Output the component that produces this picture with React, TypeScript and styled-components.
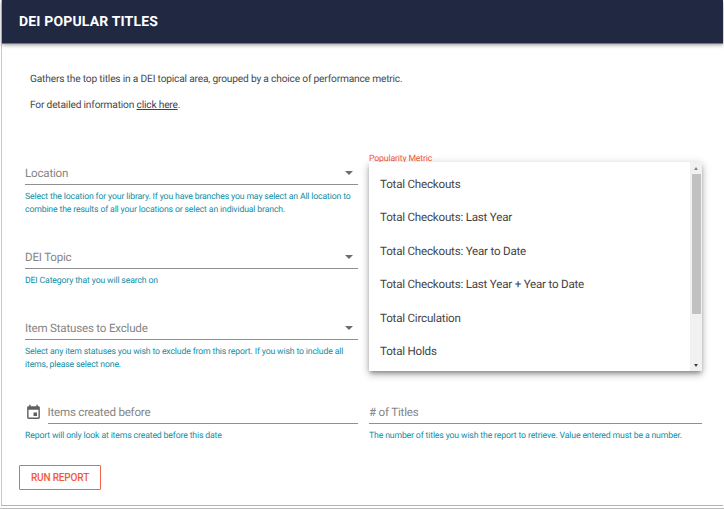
import React from "react";
import styled, { createGlobalStyle } from "styled-components";

const GlobalStyle = createGlobalStyle`
  * { box-sizing: border-box; }
  body {
    margin: 0;
    background: #fff;
    font-family: Roboto, "Liberation Sans", sans-serif;
    text-rendering: geometricPrecision;
    overflow: hidden;
  }
`;

const Page = styled.div`
  height: 509px;
  padding: 0 1px 2px 1px;
  border-bottom: 1px solid #bdbdbd;
`;

const Panel = styled.main`
  height: 506px;
  border-left: 1px solid #c6c8ca;
  border-bottom: 1px solid #b4b4b4;
`;

const Header = styled.header`
  height: 43px;
  padding: 0 17px;
  display: flex;
  align-items: center;
  background: #202842;
  box-shadow: 0 1px 0 #70758a, 0 2px 4px rgba(0, 0, 0, 0.4);
`;

const Title = styled.h1`
  margin: 0;
  color: #fff;
  font-size: 14px;
  line-height: 20px;
  font-weight: 700;
  letter-spacing: 0.17px;
`;

const Intro = styled.section`
  padding: 30px 28px 0;
  height: 115px;
  color: #484848;
  font-size: 10.2px;
  letter-spacing: -0.185px;
  line-height: 14px;
`;

const Paragraph = styled.p`
  margin: 0 0 12px;
`;

const Link = styled.a`
  color: #3a4262;
  text-decoration: underline;
`;

const Form = styled.form`
  padding: 0 21px 0 23px;
  display: grid;
  grid-template-columns: 333px 333px;
  column-gap: 11px;
  row-gap: 26px;
`;

const Field = styled.div<{ $column?: number; $row?: number }>`
  grid-column: ${(p) => p.$column ?? 1};
  grid-row: ${(p) => p.$row ?? "auto"};
  position: relative;
`;

const ControlRow = styled.div`
  display: flex;
  align-items: flex-end;
`;

const Control = styled.div`
  flex: 1;
  height: 27px;
  padding: 4px 5px 0 0;
  display: flex;
  align-items: center;
  justify-content: space-between;
  border-bottom: 1px solid #8f8f8f;
`;

const Label = styled.label`
  color: #858585;
  font-size: 11.6px;
  letter-spacing: -0.21px;
  line-height: 18px;
`;

const Caret = styled.span`
  border: 4px solid transparent;
  border-top-color: #6c6c6c;
  border-bottom: 0;
`;

const Helper = styled.p`
  margin: 6px 0 -1px;
  color: #108ea6;
  font-size: 8.7px;
  letter-spacing: -0.15px;
  line-height: 13px;
  white-space: pre;
`;

const CalendarIcon = styled.svg`
  width: 17px;
  height: 17px;
  margin-right: 6px;
  margin-bottom: 3.5px;
  margin-left: -0.5px;
  fill: #606060;
`;

const FloatingLabel = styled.label`
  display: block;
  color: #f4583c;
  font-size: 8.7px;
  letter-spacing: -0.15px;
  line-height: 12px;
  margin-top: -5px;
`;

const Menu = styled.div`
  position: absolute;
  z-index: 2;
  left: 0;
  top: 4px;
  width: 333px;
  height: 209px;
  display: flex;
  background: #fff;
  box-shadow: 0 3px 4px -1px rgba(0, 0, 0, 0.3), 0 4px 8px rgba(0, 0, 0, 0.18),
    0 1px 9px rgba(0, 0, 0, 0.12);
`;

const Options = styled.ul`
  flex: 1;
  margin: 0;
  padding: 5.3px 11px 0;
  list-style: none;
  overflow: hidden;
`;

const Option = styled.li`
  height: 33.4px;
  display: flex;
  align-items: center;
  color: #444;
  font-size: 11.6px;
  letter-spacing: -0.21px;
`;

const Scrollbar = styled.div`
  width: 12px;
  display: flex;
  flex-direction: column;
  align-items: center;
  background: #f1f1f1;
`;

const Thumb = styled.div`
  width: 9px;
  height: 140px;
  margin-top: 4px;
  background: #c1c1c1;
`;

const ScrollArrow = styled.span<{ $down?: boolean }>`
  margin: ${(p) => (p.$down ? "auto 0 4px" : "5px 0 0")};
  border: 2.5px solid transparent;
  ${(p) =>
    p.$down
      ? "border-top: 3px solid #404040; border-bottom: 0;"
      : "border-bottom: 3px solid #858585; border-top: 0;"}
`;

const RunButton = styled.button`
  display: block;
  margin: 23px 0 0 17px;
  width: 82px;
  height: 25px;
  padding: 0;
  background: #fff;
  border: 1px solid #f4644a;
  border-radius: 1px;
  color: #f4583c;
  font: 500 10px Roboto, sans-serif;
  letter-spacing: -0.15px;
`;

const options = [
  "Total Checkouts",
  "Total Checkouts: Last Year",
  "Total Checkouts: Year to Date",
  "Total Checkouts: Last Year + Year to Date",
  "Total Circulation",
  "Total Holds",
];

const selects = [
  {
    label: "Location",
    help: "Select the location for your library. If you have branches you may select an All location to\ncombine the results of all your locations or select an individual branch.",
  },
  { label: "DEI Topic", help: "DEI Category that you will search on" },
  {
    label: "Item Statuses to Exclude",
    help: "Select any item statuses you wish to exclude from this report. If you wish to include all\nitems, please select none.",
  },
];

export default function App() {
  return (
    <Page>
      <GlobalStyle />
      <Panel>
        <Header>
          <Title>DEI POPULAR TITLES</Title>
        </Header>
        <Intro>
          <Paragraph>
            Gathers the top titles in a DEI topical area, grouped by a choice of performance metric.
          </Paragraph>
          <Paragraph>
            For detailed information <Link href="#">click here</Link>.
          </Paragraph>
        </Intro>
        <Form>
          {selects.map((s, i) => (
            <Field key={s.label} $row={i + 1}>
              <Control>
                <Label>{s.label}</Label>
                <Caret />
              </Control>
              <Helper>{s.help}</Helper>
            </Field>
          ))}
          <Field $column={2} $row={1}>
            <FloatingLabel>Popularity Metric</FloatingLabel>
            <Menu>
              <Options>
                {options.map((o) => (
                  <Option key={o}>{o}</Option>
                ))}
              </Options>
              <Scrollbar>
                <ScrollArrow />
                <Thumb />
                <ScrollArrow $down />
              </Scrollbar>
            </Menu>
          </Field>
          <Field $row={4}>
            <ControlRow>
              <CalendarIcon viewBox="0 0 24 24">
                <path d="M17 12h-5v5h5v-5zM16 1v2H8V1H6v2H5c-1.11 0-1.99.9-1.99 2L3 19c0 1.1.89 2 2 2h14c1.1 0 2-.9 2-2V5c0-1.1-.9-2-2-2h-1V1h-2zm3 18H5V8h14v11z" />
              </CalendarIcon>
              <Control>
                <Label>Items created before</Label>
              </Control>
            </ControlRow>
            <Helper>Report will only look at items created before this date</Helper>
          </Field>
          <Field $column={2} $row={4}>
            <Control>
              <Label># of Titles</Label>
            </Control>
            <Helper>
              The number of titles you wish the report to retrieve. Value entered must be a number.
            </Helper>
          </Field>
        </Form>
        <RunButton type="button">RUN REPORT</RunButton>
      </Panel>
    </Page>
  );
}
